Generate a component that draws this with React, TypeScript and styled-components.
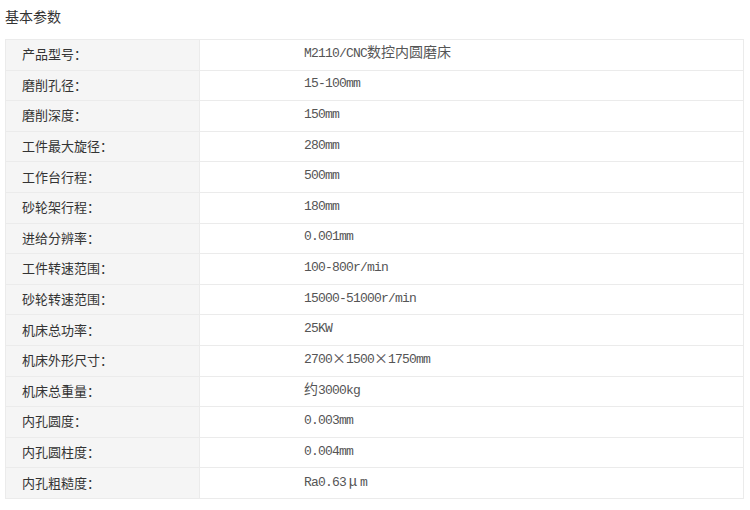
import React from "react";
import styled, { createGlobalStyle } from "styled-components";

const GlobalStyle = createGlobalStyle`
  body {
    margin: 0;
    background: #fff;
    font-family: "Noto Sans CJK SC", sans-serif;
  }
`;

const Wrap = styled.div`
  width: 750px;
  padding: 6px 6px 0 5px;
  box-sizing: border-box;
`;

const Title = styled.h3`
  margin: 0 0 13px;
  height: 20px;
  line-height: 20px;
  font-size: 14px;
  font-weight: normal;
  color: #333;
`;

const Table = styled.table`
  width: 739px;
  border-collapse: collapse;
  border: 1px solid #ebebeb;
  font-size: 13px;
`;

const Row = styled.tr`
  height: 30.6px;
  border-bottom: 1px solid #ebebeb;
`;

const Label = styled.td`
  width: 177px;
  padding: 0 0 2px 16px;
  background: #f5f5f5;
  color: #333;
  border-right: 1px solid #ebebeb;
`;

const Value = styled.td`
  padding: 0 0 2px 104px;
  color: #555;
  font-family: "Liberation Mono", "Noto Sans CJK SC", monospace;
  font-size: 13px;
  line-height: 18px;
  letter-spacing: -0.8px;
`;

const Cjk = styled.span`
  font-family: "Noto Sans CJK SC", sans-serif;
  font-size: 14px;
  line-height: 1;
  letter-spacing: 0;
  display: inline-block;
  text-align: center;
  min-width: 14px;
`;

const params: [string, string][] = [
  ["产品型号：", "M2110/CNC数控内圆磨床"],
  ["磨削孔径：", "15-100mm"],
  ["磨削深度：", "150mm"],
  ["工件最大旋径：", "280mm"],
  ["工作台行程：", "500mm"],
  ["砂轮架行程：", "180mm"],
  ["进给分辨率：", "0.001mm"],
  ["工件转速范围：", "100-800r/min"],
  ["砂轮转速范围：", "15000-51000r/min"],
  ["机床总功率：", "25KW"],
  ["机床外形尺寸：", "2700×1500×1750mm"],
  ["机床总重量：", "约3000kg"],
  ["内孔圆度：", "0.003mm"],
  ["内孔圆柱度：", "0.004mm"],
  ["内孔粗糙度：", "Ra0.63μm"],
];

// wide glyphs (CJK, ×, μ) get full-width cells like the original SimSun text
const isWide = (ch: string) => /[\u00d7\u03bc\u4e00-\u9fff]/.test(ch);

function renderValue(text: string) {
  const parts: React.ReactNode[] = [];
  let buf = "";
  Array.from(text).forEach((ch, i) => {
    if (isWide(ch)) {
      if (buf) parts.push(buf);
      buf = "";
      parts.push(<Cjk key={i}>{ch}</Cjk>);
    } else {
      buf += ch;
    }
  });
  if (buf) parts.push(buf);
  return parts;
}

export default function App() {
  return (
    <>
      <GlobalStyle />
      <Wrap>
        <Title>基本参数</Title>
        <Table>
          <tbody>
            {params.map(([k, v]) => (
              <Row key={k}>
                <Label>{k}</Label>
                <Value>{renderValue(v)}</Value>
              </Row>
            ))}
          </tbody>
        </Table>
      </Wrap>
    </>
  );
}
